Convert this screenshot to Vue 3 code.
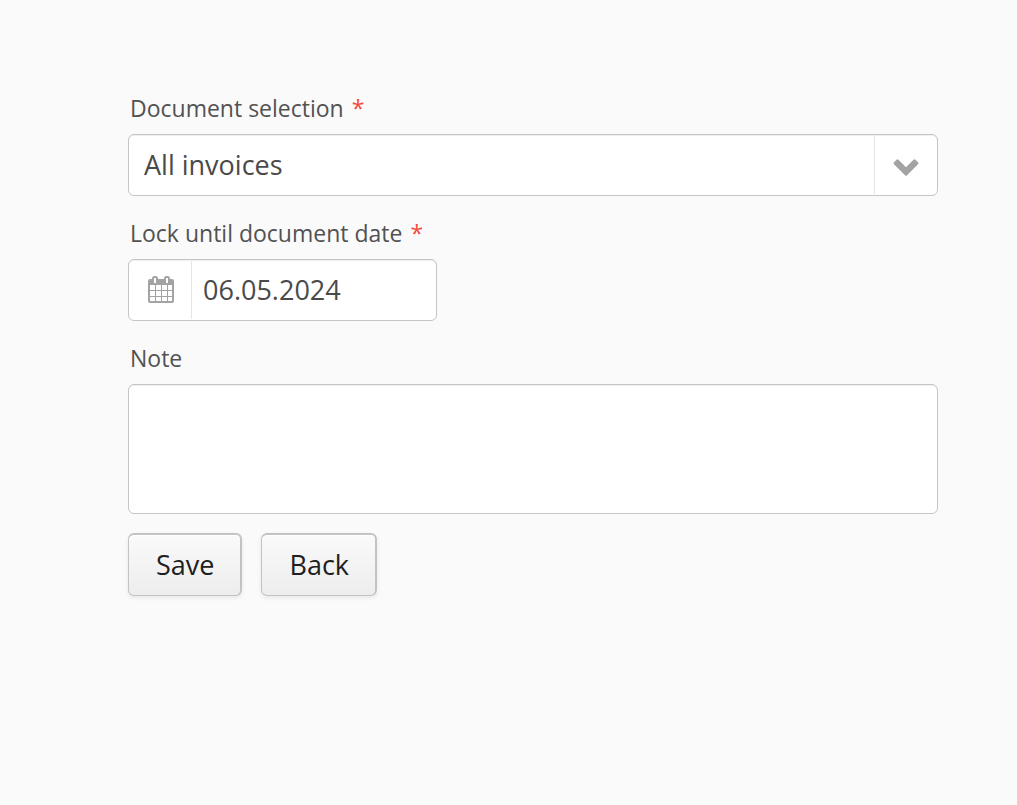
<script setup>
import { ref } from 'vue'

const selection = ref('all')
const date = ref('06.05.2024')
const note = ref('')
</script>

<template>
  <form class="form" @submit.prevent>
    <div class="field">
      <label class="label" for="selection">Document selection<span class="required">*</span></label>
      <div class="control">
        <select id="selection" v-model="selection" class="input" required>
          <option value="all">All invoices</option>
        </select>
        <span class="addon addon-right">
          <svg width="26" height="26" viewBox="0 0 26 26" aria-hidden="true">
            <path d="M1 10.300L3.500 7.800Q4.500 6.800 5.500 7.800L13 15.200L20.500 7.800Q21.500 6.800 22.500 7.800L25 10.300Q26 11.300 25 12.300L14 23.200Q13 24.200 12 23.200L1 12.300Q0 11.300 1 10.300Z" fill="#a3a3a3" />
          </svg>
        </span>
      </div>
    </div>

    <div class="field">
      <label class="label" for="date">Lock until document date<span class="required">*</span></label>
      <div class="control control-date">
        <button class="addon addon-left" type="button" aria-label="Choose date">
          <svg width="26" height="28" viewBox="0 0 26 28" aria-hidden="true">
            <path
              fill="#a3a3a3"
              fill-rule="evenodd"
              d="M2 3H4V2.500A2.500 2.500 0 0 1 6.500 0H7.500A2.500 2.500 0 0 1 10 2.500V3H16V2.500A2.500 2.500 0 0 1 18.500 0H19.500A2.500 2.500 0 0 1 22 2.500V3H24A2 2 0 0 1 26 5V25A2 2 0 0 1 24 27H2A2 2 0 0 1 0 25V5A2 2 0 0 1 2 3ZM6.500 2A.5.5 0 0 0 6 2.500V6.500A.5.5 0 0 0 6.500 7H7.500A.5.5 0 0 0 8 6.500V2.500A.5.5 0 0 0 7.500 2ZM18.500 2A.5.5 0 0 0 18 2.500V6.500A.5.5 0 0 0 18.500 7H19.500A.5.5 0 0 0 20 6.500V2.500A.5.5 0 0 0 19.500 2ZM2 9V14H7V9ZM8 9V14H13V9ZM14 9V14H19V9ZM20 9V14H24V9ZM2 15V20H7V15ZM8 15V20H13V15ZM14 15V20H19V15ZM20 15V20H24V15ZM2 21V25H7V21ZM8 21V25H13V21ZM14 21V25H19V21ZM20 21V25H24V21Z"
            />
          </svg>
        </button>
        <input id="date" v-model="date" class="input" type="text" required />
      </div>
    </div>

    <div class="field">
      <label class="label" for="note">Note</label>
      <textarea id="note" v-model="note" class="control note"></textarea>
    </div>

    <div class="actions">
      <button class="button" type="submit">Save</button>
      <button class="button" type="button">Back</button>
    </div>
  </form>
</template>

<style>
body {
  background: #fafafa;
}
</style>

<style scoped>
.form {
  padding: 92px 79px 40px 128px;
  font-family: "Open Sans", sans-serif;
  color: #4a4a4a;
}

.field {
  margin-bottom: 21px;
}

.label {
  display: block;
  margin-bottom: 10px;
  padding-left: 2px;
  color: #525252;
  font-size: 23px;
  line-height: 32px;
}

.required {
  margin-left: 8px;
  color: #f2493d;
}

.control {
  position: relative;
  display: flex;
  box-sizing: border-box;
  width: 100%;
  height: 62px;
  border: 1px solid #c5c5c5;
  border-radius: 6px;
  background: #fff;
  box-shadow: inset 0 1px 0 #f0f0f0;
}

.control-date {
  width: 309px;
}

.input {
  flex: 1;
  min-width: 0;
  padding: 0 12px 0 11px;
  border: 0;
  background: transparent;
  color: inherit;
  font: 400 27px/38px "Open Sans", sans-serif;
  outline: none;
}

select.input {
  appearance: none;
  padding: 0 72px 0 15px;
}

.addon {
  display: flex;
  align-items: center;
  justify-content: center;
  box-sizing: border-box;
  width: 63px;
  margin: 1px 0;
  padding: 0;
  border: 0 solid #e4e4e4;
  background: none;
}

.addon-left {
  padding-left: 2px;
  border-right-width: 1px;
}

.addon-right {
  position: absolute;
  top: 0;
  right: 0;
  bottom: 0;
  border-left-width: 1px;
  pointer-events: none;
}

.note {
  height: 130px;
  padding: 10px 15px;
  color: inherit;
  font: 400 27px/38px "Open Sans", sans-serif;
  resize: none;
  outline: none;
}

.actions {
  display: flex;
  gap: 19px;
  margin-top: -2px;
}

.button {
  height: 63px;
  padding: 0 26px 0 27px;
  border: 1px solid #c3c3c3;
  border-width: 2px 2px 1px 1px;
  border-radius: 6px;
  background: linear-gradient(#fafafa, #ededed);
  box-shadow: 0 2px 4px rgba(0, 0, 0, 0.08), inset 0 1px 0 #fff;
  color: #202020;
  font: 400 27px/38px "Open Sans", sans-serif;
}
</style>
